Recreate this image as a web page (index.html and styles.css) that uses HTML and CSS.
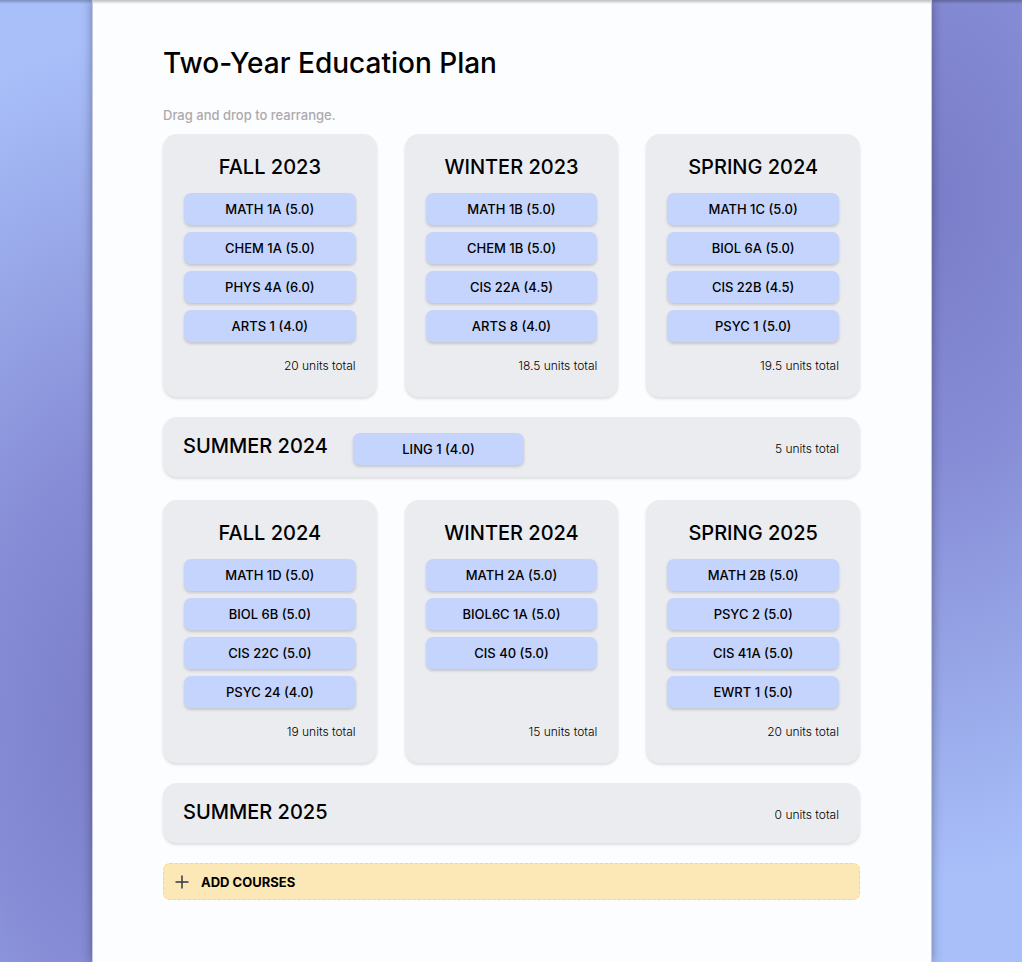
FILE: index.html
```
<!DOCTYPE html>
<html lang="en">
<head>
<meta charset="utf-8">
<meta name="viewport" content="width=device-width, initial-scale=1">
<title>Two-Year Education Plan</title>
<link rel="stylesheet" href="styles.css">
</head>
<body>
<main class="sheet">
  <h1 class="title">Two-Year Education Plan</h1>
  <p class="hint">Drag and drop to rearrange.</p>

  <div class="plan">
    <div class="year">
      <section class="term">
        <h2 class="term-name">FALL 2023</h2>
        <ul class="courses">
          <li class="course" draggable="true">MATH 1A (5.0)</li>
          <li class="course" draggable="true">CHEM 1A (5.0)</li>
          <li class="course" draggable="true">PHYS 4A (6.0)</li>
          <li class="course" draggable="true">ARTS 1 (4.0)</li>
        </ul>
        <p class="units">20 units total</p>
      </section>
      <section class="term">
        <h2 class="term-name">WINTER 2023</h2>
        <ul class="courses">
          <li class="course" draggable="true">MATH 1B (5.0)</li>
          <li class="course" draggable="true">CHEM 1B (5.0)</li>
          <li class="course" draggable="true">CIS 22A (4.5)</li>
          <li class="course" draggable="true">ARTS 8 (4.0)</li>
        </ul>
        <p class="units">18.5 units total</p>
      </section>
      <section class="term">
        <h2 class="term-name">SPRING 2024</h2>
        <ul class="courses">
          <li class="course" draggable="true">MATH 1C (5.0)</li>
          <li class="course" draggable="true">BIOL 6A (5.0)</li>
          <li class="course" draggable="true">CIS 22B (4.5)</li>
          <li class="course" draggable="true">PSYC 1 (5.0)</li>
        </ul>
        <p class="units">19.5 units total</p>
      </section>
    </div>

    <section class="summer">
      <h2 class="term-name">SUMMER 2024</h2>
      <ul class="summer-courses">
        <li class="course" draggable="true">LING 1 (4.0)</li>
      </ul>
      <p class="units">5 units total</p>
    </section>

    <div class="year year-second">
      <section class="term">
        <h2 class="term-name">FALL 2024</h2>
        <ul class="courses">
          <li class="course" draggable="true">MATH 1D (5.0)</li>
          <li class="course" draggable="true">BIOL 6B (5.0)</li>
          <li class="course" draggable="true">CIS 22C (5.0)</li>
          <li class="course" draggable="true">PSYC 24 (4.0)</li>
        </ul>
        <p class="units">19 units total</p>
      </section>
      <section class="term">
        <h2 class="term-name">WINTER 2024</h2>
        <ul class="courses">
          <li class="course" draggable="true">MATH 2A (5.0)</li>
          <li class="course" draggable="true">BIOL6C 1A (5.0)</li>
          <li class="course" draggable="true">CIS 40 (5.0)</li>
        </ul>
        <p class="units">15 units total</p>
      </section>
      <section class="term">
        <h2 class="term-name">SPRING 2025</h2>
        <ul class="courses">
          <li class="course" draggable="true">MATH 2B (5.0)</li>
          <li class="course" draggable="true">PSYC 2 (5.0)</li>
          <li class="course" draggable="true">CIS 41A (5.0)</li>
          <li class="course" draggable="true">EWRT 1 (5.0)</li>
        </ul>
        <p class="units">20 units total</p>
      </section>
    </div>

    <section class="summer">
      <h2 class="term-name">SUMMER 2025</h2>
      <ul class="summer-courses"></ul>
      <p class="units">0 units total</p>
    </section>

    <button class="add" type="button">
      <svg class="add-icon" viewBox="0 0 14 14" aria-hidden="true"><path d="M7 .5v13M.5 7h13"/></svg>
      ADD COURSES
    </button>
  </div>
</main>
</body>
</html>
```
FILE: styles.css
```
* {
  box-sizing: border-box;
}

body {
  margin: 0;
  padding: 0 90px 0 92px;
  min-height: 100vh;
  display: flex;
  color: #000;
  font-family: Inter, "Liberation Sans", sans-serif;
  background:
    linear-gradient(rgba(0, 0, 0, 0.25), transparent) 0 0 / 100% 4px no-repeat,
    radial-gradient(400px 680px at 130px 720px, #7a7dc9 0%, #868cd5 38%, #97a6e7 70%, #a8bffa 100%) 0 0 / 50% 100% no-repeat,
    radial-gradient(400px 680px at calc(100% - 90px) 200px, #7a7dc9 0%, #868cd5 38%, #97a6e7 70%, #a8bffa 100%) 100% 0 / 50% 100% no-repeat;
}

h1, h2, p, ul {
  margin: 0;
  padding: 0;
  font-weight: 400;
}

ul {
  list-style: none;
}

.sheet {
  flex: 1;
  padding: 44px 71px 62px 70px;
  background: linear-gradient(rgba(0, 0, 0, 0.25), transparent) 0 0 / 100% 4px no-repeat, #fcfdff;
  border: solid #c5c8e4;
  border-width: 0 1px;
  box-shadow: 0 0 10px rgba(0, 0, 0, 0.35);
}

.title {
  font-size: 28px;
  line-height: 38px;
  font-weight: 500;
}

.hint {
  margin-top: 24px;
  font-size: 13px;
  line-height: 18px;
  font-weight: 500;
  color: #acaaaa;
}

.plan {
  margin-top: 10px;
  display: flex;
  flex-direction: column;
  gap: 20px;
}

.year {
  display: grid;
  grid-template-columns: repeat(3, 1fr);
  gap: 28px;
}

.year-second {
  margin-top: 3px;
}

.term,
.summer {
  background: #ebecf0;
  border-radius: 14px;
  box-shadow: 0 2px 3px rgba(0, 0, 0, 0.13);
}

.term {
  padding: 20px 21px 22px;
  display: flex;
  flex-direction: column;
}

.term-name {
  font-size: 20px;
  line-height: 26px;
  font-weight: 500;
  text-align: center;
}

.courses {
  margin-top: 13px;
  min-height: 150px;
  display: flex;
  flex-direction: column;
  gap: 7px;
}

.course {
  height: 32px;
  border-radius: 7px;
  background: #c5d4fc;
  box-shadow: 0 2px 3px rgba(0, 0, 0, 0.16);
  font-size: 13px;
  line-height: 32px;
  font-weight: 500;
  text-align: center;
  cursor: grab;
}

.units {
  font-size: 12px;
  line-height: 18px;
  font-weight: 300;
  text-align: right;
}

.term .units {
  margin-top: 14px;
}

.summer {
  min-height: 60px;
  padding: 16px 21px 12px 20px;
  display: flex;
  align-items: flex-start;
  gap: 25px;
}

.summer-courses {
  flex: 1;
  display: flex;
  gap: 16px;
}

.summer-courses .course {
  width: 171px;
}

.summer .units {
  line-height: 32px;
}

.add {
  height: 37px;
  padding: 0 11px;
  display: flex;
  align-items: center;
  gap: 12px;
  border: 1px dashed #ffd479;
  border-radius: 7px;
  background: #fce8b6;
  color: #000;
  font: 700 13px/18px Inter, "Liberation Sans", sans-serif;
  cursor: pointer;
}

.add-icon {
  width: 14px;
  height: 14px;
  fill: none;
  stroke: #333744;
  stroke-width: 1.5;
}
```
